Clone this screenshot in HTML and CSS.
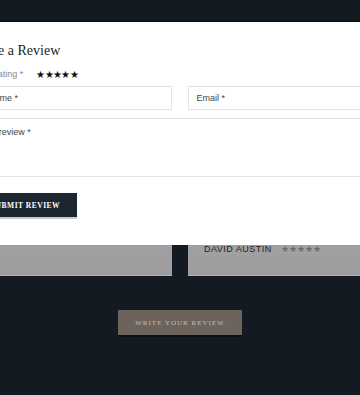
FILE: index.html
```html
<!DOCTYPE html>
<html lang="en">
<head>
    <meta charset="UTF-8">
    <meta name="viewport" content="width=device-width, initial-scale=1.0">
    <title>Reviews</title>
    <link rel="stylesheet" href="styles.css">
</head>
<body>
    <div class="page">
        <div class="reviews">
            <div class="review-card"></div>
            <div class="review-card">
                <div class="review-meta">
                    <span class="reviewer">DAVID AUSTIN</span>
                    <span class="review-stars">★★★★★</span>
                </div>
            </div>
        </div>
        <div class="write-row">
            <button class="write-button">WRITE YOUR REVIEW</button>
        </div>
    </div>

    <div class="modal">
        <h2 class="modal-title">Write a Review</h2>
        <form class="review-form">
            <div class="rating-row">
                <span class="field-label">Your rating *</span>
                <span class="rating-stars">★★★★★</span>
            </div>
            <div class="input-row">
                <div class="field field-name">Name *</div>
                <div class="field">Email *</div>
            </div>
            <div class="field field-area">Your review *</div>
            <button type="button" class="submit-button">SUBMIT REVIEW</button>
        </form>
    </div>
</body>
</html>
```

FILE: styles.css
```css
* {
    margin: 0;
    padding: 0;
    box-sizing: border-box;
    font-family: 'Liberation Sans', Arial, sans-serif;
}

body {
    background-color: #131a21;
    width: 360px;
    height: 395px;
    overflow: hidden;
    position: relative;
}

.page {
    padding-top: 196px;
}

.reviews {
    display: flex;
    justify-content: center;
    gap: 16px;
    margin: 0 -40px;
}

.review-card {
    width: 200px;
    height: 80px;
    background: linear-gradient(#a7a7a9, #9d9d9f);
    border-bottom: 1px solid #b0b0b2;
    display: flex;
    align-items: flex-end;
    padding: 0 16px 21px;
}

.review-meta {
    display: flex;
    align-items: center;
    gap: 9px;
}

.reviewer {
    font-size: 9px;
    letter-spacing: 0.5px;
    color: #1f2328;
}

.review-stars {
    font-size: 9px;
    letter-spacing: 0;
    color: #6d6d6f;
}

.write-row {
    display: flex;
    justify-content: center;
    margin-top: 34px;
}

.write-button {
    width: 124px;
    height: 25px;
    background-color: #6d635d;
    color: #c4bbb2;
    border: none;
    font-family: 'Liberation Serif', serif;
    font-size: 7px;
    letter-spacing: 1px;
    box-shadow: 0 2px 0 #0a0e12;
}

.modal {
    position: absolute;
    top: 22px;
    left: -56px;
    width: 466px;
    height: 223px;
    background-color: #fff;
    padding: 21px 30px 0;
    box-shadow: 0 -1px 2px rgba(0, 0, 0, 0.4);
}

.modal-title {
    font-family: 'Liberation Serif', serif;
    font-weight: normal;
    font-size: 14px;
    color: #1a1f24;
    margin-bottom: 9px;
    text-indent: -1px;
}

.field-label {
    font-size: 9px;
    color: #8a8a8a;
}

.rating-row {
    display: flex;
    align-items: center;
    gap: 13px;
    height: 12px;
    margin-bottom: 6px;
}

.rating-stars {
    font-size: 10px;
    letter-spacing: -0.6px;
    color: #111;
}

.input-row {
    display: flex;
    gap: 16px;
    margin-bottom: 8px;
}

.field {
    flex: 1;
    height: 24px;
    border: 1px solid #e4e4e4;
    font-size: 9px;
    color: #444;
    padding: 0 8px;
    display: flex;
    align-items: center;
}

.field-name {
    padding-left: 13px;
}

.field-area {
    height: 59px;
    align-items: flex-start;
    padding-top: 8px;
    padding-left: 4px;
    margin-bottom: 16px;
    border-left: none;
}

.submit-button {
    display: block;
    height: 24px;
    padding: 0 17px;
    background-color: #1c2630;
    color: #fff;
    border: none;
    font-family: 'Liberation Serif', serif;
    font-weight: bold;
    font-size: 7.5px;
    letter-spacing: 0.5px;
    box-shadow: 0 2px 0 #c9cbcd;
}
```
